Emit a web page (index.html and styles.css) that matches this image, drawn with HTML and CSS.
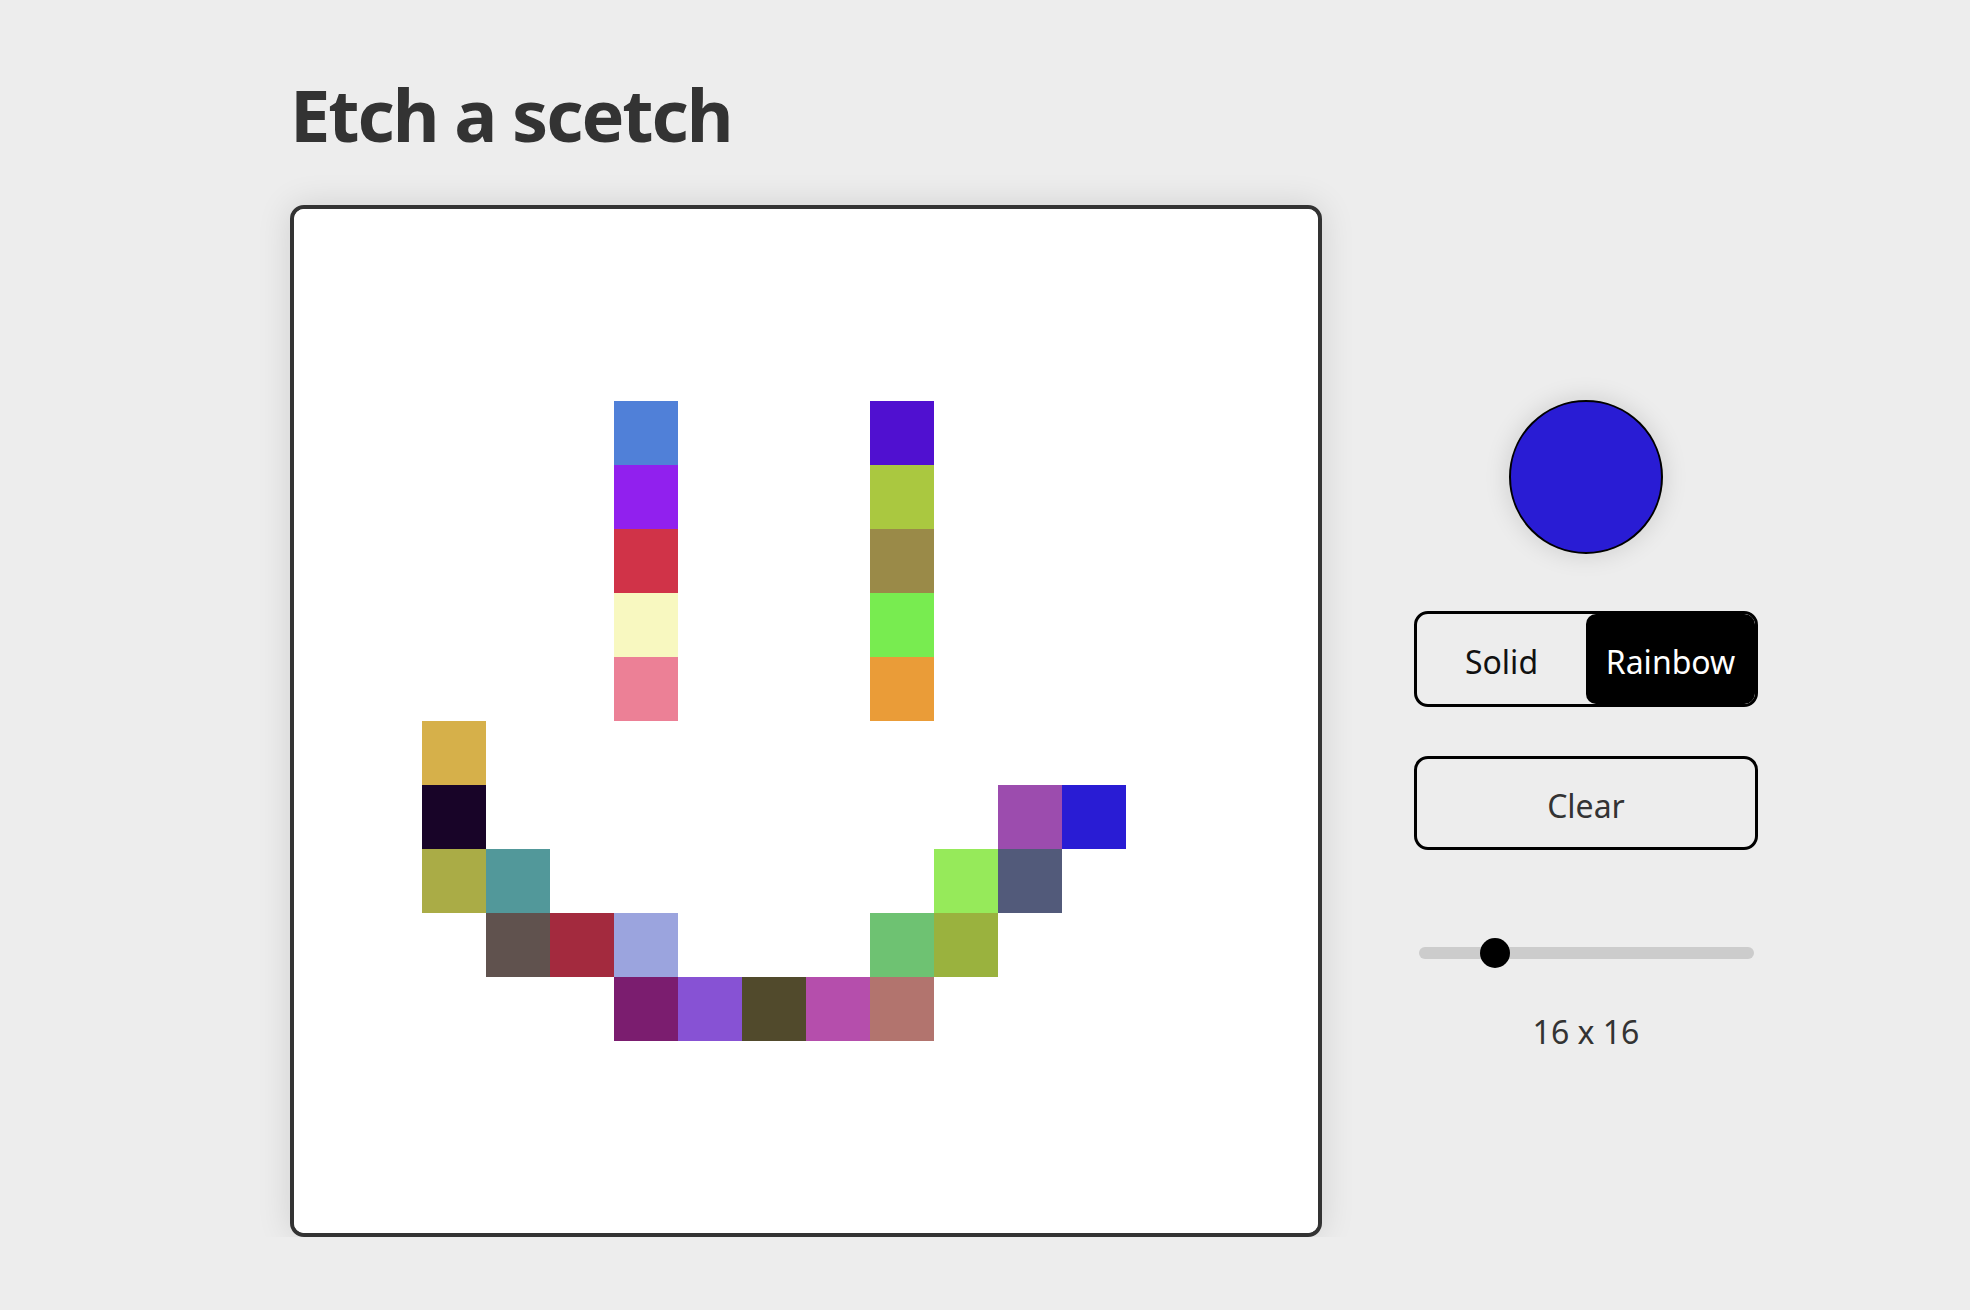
FILE: index.html
```html
<!DOCTYPE html>
<html lang="en">
<head>
<meta charset="utf-8">
<title>Etch a scetch</title>
<link rel="stylesheet" href="styles.css">
</head>
<body>
<main class="app">
  <h1 class="title">Etch a scetch</h1>
  <div class="layout">
    <div class="board" id="board"></div>
    <aside class="controls">
      <div class="swatch"></div>
      <div class="mode-toggle">
        <button class="mode">Solid</button>
        <button class="mode is-active">Rainbow</button>
      </div>
      <button class="clear">Clear</button>
      <input class="size-slider" type="range" min="4" max="64" value="16">
      <p class="size-label">16 x 16</p>
    </aside>
  </div>
</main>
<script src="script.js"></script>
</body>
</html>
```

FILE: styles.css
```css
* { box-sizing: border-box; }

html, body {
  margin: 0;
  background: #ededed;
}

body {
  font-family: "Comic Sans MS", "Noto Sans", sans-serif;
  color: #333;
}

.app {
  padding: 71px 0 0 290px;
}

.title {
  margin: 0 0 48px;
  font-size: 72px;
  line-height: 86px;
  font-weight: 700;
  letter-spacing: -2px;
  color: #333;
}

.layout {
  display: flex;
  align-items: flex-start;
  gap: 92px;
}

.board {
  width: 1032px;
  height: 1032px;
  border: 4px solid #333;
  border-radius: 14px;
  background: #fff;
  box-shadow: 0 0 34px rgba(0, 0, 0, 0.12);
  display: grid;
  grid-template-columns: repeat(16, 64px);
  grid-template-rows: repeat(16, 64px);
  overflow: hidden;
}

.cell { background: #fff; }

.controls {
  margin-top: 195px;
  width: 344px;
  display: flex;
  flex-direction: column;
  align-items: center;
}

.swatch {
  width: 154px;
  height: 154px;
  border-radius: 50%;
  border: 2px solid #000;
  background: #291cd4;
  box-shadow: 0 0 26px rgba(0, 0, 0, 0.14);
}

.mode-toggle {
  margin-top: 57px;
  width: 344px;
  height: 96px;
  border: 3px solid #000;
  border-radius: 14px;
  display: flex;
  overflow: hidden;
}

.mode {
  flex: 1;
  border: 0;
  background: transparent;
  font: inherit;
  font-size: 32px;
  color: #111;
  border-radius: 10px;
  padding: 4px 0 0;
}

.mode.is-active {
  background: #000;
  color: #fff;
}

.clear {
  margin-top: 49px;
  width: 344px;
  height: 94px;
  border: 3px solid #000;
  border-radius: 14px;
  background: transparent;
  font: inherit;
  font-size: 32px;
  color: #333;
  padding: 4px 0 0;
}

.size-slider {
  -webkit-appearance: none;
  appearance: none;
  margin: 88px 0 0;
  width: 335px;
  height: 30px;
  background: transparent;
}

.size-slider::-webkit-slider-runnable-track {
  height: 12px;
  border-radius: 6px;
  background: #ccc;
}

.size-slider::-webkit-slider-thumb {
  -webkit-appearance: none;
  appearance: none;
  width: 30px;
  height: 30px;
  margin-top: -9px;
  border-radius: 50%;
  background: #000;
  border: 0;
}

.size-label {
  margin: 45px 0 0;
  font-size: 32px;
  line-height: 38px;
  color: #333;
}
```

FILE: script.js
```js
(function () {
  var painted = {
    "5,3": "#5080d8", "5,4": "#9120ee", "5,5": "#d03348", "5,6": "#f8f8c0", "5,7": "#ec8096",
    "9,3": "#5010d0", "9,4": "#aac840", "9,5": "#9a8a48", "9,6": "#78ec50", "9,7": "#ea9c38",
    "2,8": "#d6b04a", "2,9": "#180428", "2,10": "#aaac46",
    "3,10": "#52989a", "3,11": "#60524e",
    "4,11": "#a32a3e",
    "5,11": "#9ba4de", "5,12": "#7b1d6f",
    "6,12": "#8752d4",
    "7,12": "#514a2c",
    "8,12": "#b54eac",
    "9,11": "#6ec272", "9,12": "#b2746e",
    "10,10": "#96ea5a", "10,11": "#9ab23e",
    "11,9": "#9c4cae", "11,10": "#525a7a",
    "12,9": "#291cd4"
  };
  var board = document.getElementById("board");
  for (var r = 0; r < 16; r++) {
    for (var c = 0; c < 16; c++) {
      var cell = document.createElement("div");
      cell.className = "cell";
      var color = painted[c + "," + r];
      if (color) cell.style.backgroundColor = color;
      board.appendChild(cell);
    }
  }
})();
```
